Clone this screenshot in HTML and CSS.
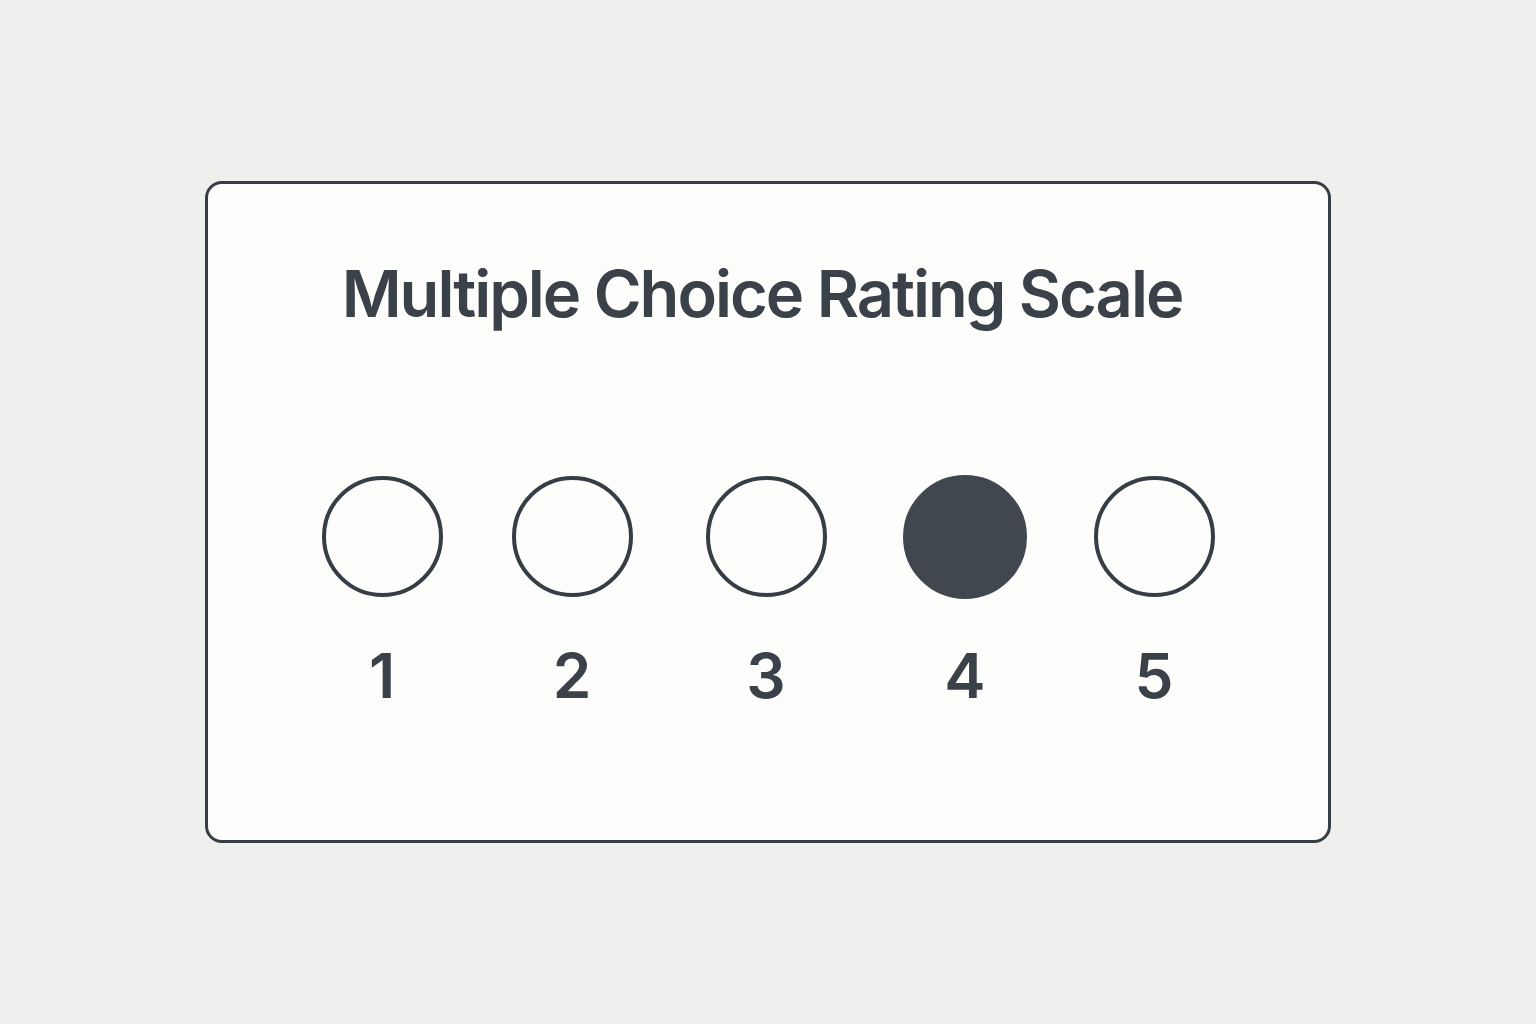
FILE: index.html
```html
<!DOCTYPE html>
<html lang="en">
<head>
<meta charset="utf-8">
<title>Multiple Choice Rating Scale</title>
<link rel="stylesheet" href="styles.css">
</head>
<body>
<main class="page">
  <section class="card">
    <h1 class="title">Multiple Choice Rating Scale</h1>
    <div class="scale">
      <div class="option"><span class="radio"></span><span class="label">1</span></div>
      <div class="option"><span class="radio"></span><span class="label">2</span></div>
      <div class="option"><span class="radio"></span><span class="label">3</span></div>
      <div class="option"><span class="radio radio-selected"></span><span class="label">4</span></div>
      <div class="option"><span class="radio"></span><span class="label">5</span></div>
    </div>
  </section>
</main>
</body>
</html>
```

FILE: styles.css
```css
html, body {
  margin: 0;
  padding: 0;
  background: #efefed;
}

.page {
  width: 1536px;
  height: 1024px;
  display: flex;
  align-items: center;
  justify-content: center;
  font-family: Inter, "Liberation Sans", sans-serif;
  color: #3d434a;
}

.card {
  box-sizing: border-box;
  width: 1126px;
  height: 662px;
  background: #fdfdfc;
  border: 3px solid #373d44;
  border-radius: 17px;
  display: flex;
  flex-direction: column;
  align-items: center;
  padding-top: 70px;
}

.title {
  margin: 0;
  font-size: 65px;
  line-height: 80px;
  font-weight: 560;
  letter-spacing: -2px;
  color: #3b4148;
  transform: translateX(-6px);
}

.scale {
  margin-top: 142px;
  display: flex;
  gap: 70px;
}

.option {
  width: 123px;
  display: flex;
  flex-direction: column;
  align-items: center;
  gap: 41px;
}

.option:nth-child(2) { transform: translateX(-3px); }
.option:nth-child(3) { transform: translateX(-2px); }
.option:nth-child(4) { transform: translateX(4px); }

.radio {
  box-sizing: border-box;
  width: 121px;
  height: 121px;
  border-radius: 50%;
  border: 4px solid #373d44;
  background: #fdfdfc;
}

.radio-selected {
  width: 124px;
  height: 124px;
  margin-top: -1.5px;
  margin-bottom: -1.5px;
  background: #41474e;
  border-color: #41474e;
}

.label {
  font-size: 62px;
  line-height: 75px;
  font-weight: 560;
  color: #3b4148;
}
```
